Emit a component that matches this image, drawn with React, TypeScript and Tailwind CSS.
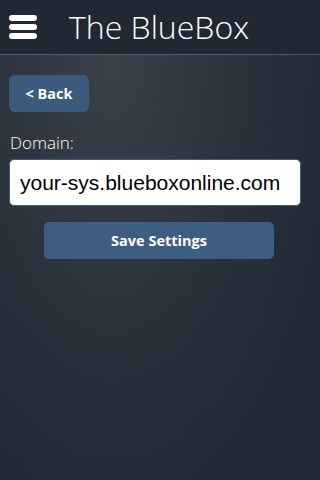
export default function App() {
  return (
    <div className="w-[320px] h-[480px] overflow-hidden bg-[#202a35] font-['Open_Sans',sans-serif]">
      <header className="h-[55px] bg-[#1f2833] border-b border-[#4b5c73] flex items-center">
        <div className="ml-[9px] w-[28px] flex flex-col gap-[3px]">
          <span className="block h-[6px] rounded-full bg-white" />
          <span className="block h-[6px] rounded-full bg-white" />
          <span className="block h-[6px] rounded-full bg-white" />
        </div>
        <h1 className="ml-[32px] text-[32px] font-light text-white leading-none -mt-[1px]">
          The BlueBox
        </h1>
      </header>
      <main className="h-[425px] px-[9px] pt-[20px] bg-[radial-gradient(ellipse_at_35%_0%,#3b4149_0%,#2a323c_45%,#202a35_80%)]">
        <button className="h-[37px] w-[80px] rounded-[6px] bg-[#3b5b7d] text-white text-[14.5px] font-bold">
          &lt; Back
        </button>
        <label className="block mt-[19px] ml-[1px] text-[17px] text-white leading-[24px] font-light">
          Domain:
        </label>
        <div className="mt-[4px] w-[292px] h-[47px] rounded-[5px] bg-white border border-[#3d5e80] flex items-center pl-[10px]">
          <span className="text-[21px] text-black font-['Liberation_Sans',Arial,sans-serif]">
            your-sys.blueboxonline.com
          </span>
        </div>
        <div className="flex justify-center mt-[16px] pr-[2px]">
          <button className="h-[37px] w-[230px] rounded-[5px] bg-[#3d5e80] text-white text-[14.5px] font-bold">
            Save Settings
          </button>
        </div>
      </main>
    </div>
  );
}
